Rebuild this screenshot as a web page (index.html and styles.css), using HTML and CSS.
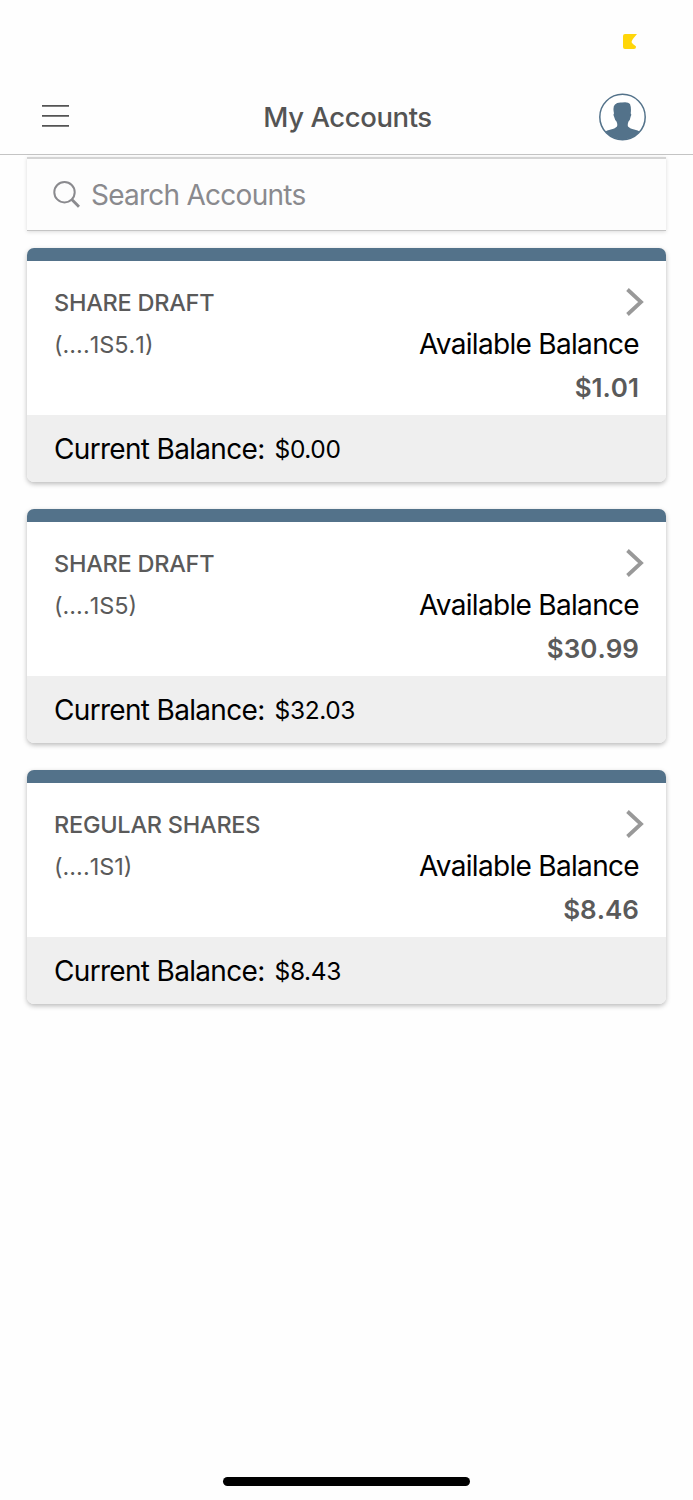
FILE: index.html
```
<!DOCTYPE html>
<html lang="en">
<head>
  <meta charset="utf-8">
  <title>My Accounts</title>
  <link rel="stylesheet" href="styles.css">
</head>
<body>
  <div class="status-bar">
    <svg class="status-icon" width="14" height="15" viewBox="0 0 14 15">
      <path d="M2 0H14C12 3 9 5 8.500 8C9 10 12 11 13 12.500V13Q13 15 11 15H2Q0 15 0 13V2Q0 0 2 0Z" fill="#ffd60a"/>
    </svg>
  </div>

  <header class="header">
    <button class="menu-btn" aria-label="Menu">
      <svg width="28" height="24" viewBox="0 0 28 24">
        <path d="M1 1.800H28M1 11.800H28M1 21.800H28" stroke="#545454" stroke-width="1.700"/>
      </svg>
    </button>
    <h1>My Accounts</h1>
    <button class="profile-btn" aria-label="Profile">
      <svg width="48" height="48" viewBox="0 0 48 48">
        <clipPath id="avatar"><circle cx="23.500" cy="24" r="22.500"/></clipPath>
        <circle cx="23.500" cy="24" r="22.700" fill="#fff" stroke="#53728a" stroke-width="1.500"/>
        <path clip-path="url(#avatar)" d="M5 39.500C9 36 15 37 18 33.500Q18.800 31.500 17.500 28.500Q16 27.500 15 23.500Q14 21 15 20.500Q13.500 13.500 16 11.500Q18 9 23 9.500Q29 8.500 31 11Q32.500 15 31.700 20.500Q32.800 21 31.700 23.500Q31 27.500 29.500 28.500Q28.300 31.500 29 33.500C32 37 38 36 42 39.500V48H5Z" fill="#53728a"/>
      </svg>
    </button>
  </header>

  <main class="content">
    <div class="search">
      <svg width="28" height="28" viewBox="0 0 28 28" fill="none" stroke="#8a8a8e">
        <circle cx="11.500" cy="11.200" r="10.200" stroke-width="2"/>
        <path d="M18.800 18.500L26 25.700" stroke-width="2.900"/>
      </svg>
      <span>Search Accounts</span>
    </div>

    <section class="card">
      <div class="card-body">
        <div class="row title-row">
          <h2>SHARE DRAFT</h2>
          <svg class="chevron" width="18" height="28" viewBox="0 0 18 28"><path d="M1.500 1.500L15 14L1.500 26.500"/></svg>
        </div>
        <div class="row">
          <span class="number">(....1S5.1)</span>
          <span class="label">Available Balance</span>
        </div>
        <div class="available">$1.01</div>
      </div>
      <div class="card-footer">
        <span class="label">Current Balance:</span>
        <span class="current">$0.00</span>
      </div>
    </section>

    <section class="card">
      <div class="card-body">
        <div class="row title-row">
          <h2>SHARE DRAFT</h2>
          <svg class="chevron" width="18" height="28" viewBox="0 0 18 28"><path d="M1.500 1.500L15 14L1.500 26.500"/></svg>
        </div>
        <div class="row">
          <span class="number">(....1S5)</span>
          <span class="label">Available Balance</span>
        </div>
        <div class="available">$30.99</div>
      </div>
      <div class="card-footer">
        <span class="label">Current Balance:</span>
        <span class="current">$32.03</span>
      </div>
    </section>

    <section class="card">
      <div class="card-body">
        <div class="row title-row">
          <h2>REGULAR SHARES</h2>
          <svg class="chevron" width="18" height="28" viewBox="0 0 18 28"><path d="M1.500 1.500L15 14L1.500 26.500"/></svg>
        </div>
        <div class="row">
          <span class="number">(....1S1)</span>
          <span class="label">Available Balance</span>
        </div>
        <div class="available">$8.46</div>
      </div>
      <div class="card-footer">
        <span class="label">Current Balance:</span>
        <span class="current">$8.43</span>
      </div>
    </section>
  </main>

  <div class="home-indicator"></div>
</body>
</html>
```
FILE: styles.css
```
* {
  box-sizing: border-box;
}

body {
  display: flex;
  flex-direction: column;
  height: 1500px;
  margin: 0;
  background-color: #fefefe;
  color: #000;
  font-family: Inter, "Liberation Sans", sans-serif;
  white-space: nowrap;
}

h1, h2 {
  margin: 0;
}

button {
  padding: 0;
  border: none;
  background: none;
  display: block;
}

.status-bar {
  display: flex;
  justify-content: flex-end;
  height: 80px;
  padding: 34px 56px 0 0;
}

.header {
  display: grid;
  grid-template-columns: 67px 1fr 60px;
  align-items: center;
  height: 75px;
  padding: 0 46px 0 41px;
  border-bottom: 1px solid #c4c4c4;
}

.header h1 {
  color: #545454;
  font-size: 27.5px;
  font-weight: 450;
  letter-spacing: -0.42px;
  text-align: center;
}

.menu-btn {
  justify-self: start;
}

.profile-btn {
  justify-self: end;
  padding-top: 2px;
}

.content {
  flex: 1;
  padding: 2px 27px 0;
}

.search {
  display: flex;
  align-items: center;
  gap: 10px;
  height: 74px;
  margin-bottom: 17px;
  padding: 0 26px;
  border-top: 2px solid #d4d4d4;
  border-bottom: 1px solid #c4c4c4;
  background-color: #fdfdfd;
  box-shadow: 0 1px 4px rgba(0, 0, 0, 0.14);
  color: #8a8a8e;
  font-size: 28px;
  letter-spacing: -0.75px;
}

.card {
  height: 234px;
  margin-bottom: 27px;
  border-top: 13px solid #53728a;
  border-radius: 7px;
  background-color: #fff;
  box-shadow: 0 2px 5px rgba(0, 0, 0, 0.27);
  overflow: hidden;
}

.card-body {
  height: 154px;
  padding: 20px 27px 0;
}

.row {
  display: flex;
  justify-content: space-between;
  align-items: center;
  height: 42px;
}

.title-row {
  margin-right: -5px;
}

.card h2 {
  color: #5a5a5a;
  font-size: 23.5px;
  font-weight: 450;
  letter-spacing: -0.25px;
}

.chevron path {
  fill: none;
  stroke: #999;
  stroke-width: 3.8;
}

.number {
  color: #5a5a5a;
  font-size: 23.5px;
  font-kerning: none;
}

.label {
  font-size: 28px;
  letter-spacing: -0.68px;
}

.available {
  height: 44px;
  color: #5a5a5a;
  font-size: 26px;
  font-weight: 600;
  font-kerning: none;
  line-height: 46px;
  text-align: right;
}

.card-footer {
  display: flex;
  align-items: center;
  gap: 10px;
  height: 67px;
  padding: 1px 27px 0;
  background-color: #efefef;
}

.current {
  font-size: 24.5px;
  letter-spacing: -0.4px;
}

.home-indicator {
  width: 247px;
  height: 9px;
  margin: 0 auto 14px;
  border-radius: 5px;
  background-color: #000;
}
```
